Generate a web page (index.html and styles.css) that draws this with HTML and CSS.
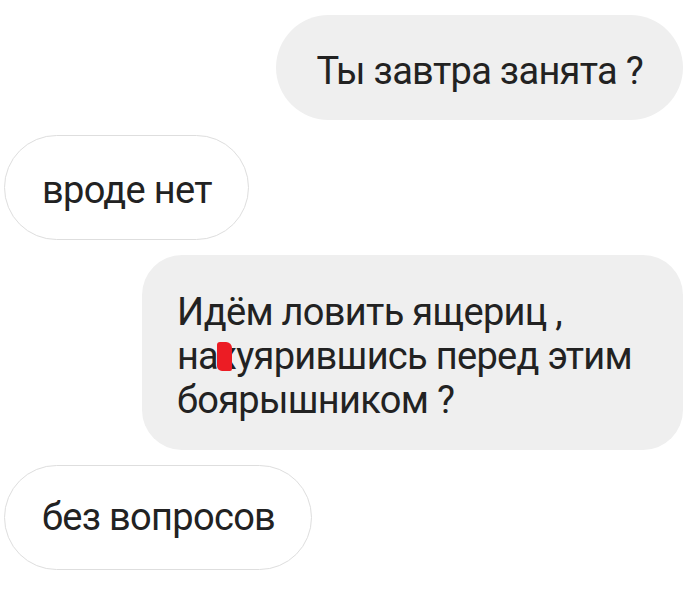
FILE: index.html
```html
<!DOCTYPE html>
<html lang="ru">
<head>
    <meta charset="UTF-8">
    <meta name="viewport" content="width=device-width, initial-scale=1.0">
    <title>Чат</title>
    <link rel="stylesheet" href="styles.css">
</head>
<body>
    <div class="chat">
        <div class="msg msg-out msg-short">Ты завтра занята ?</div>
        <div class="msg msg-in">вроде нет</div>
        <div class="msg msg-out msg-long">Идём ловить ящериц ,<br>на<span class="censor">х</span>уярившись перед этим<br>боярышником ?</div>
        <div class="msg msg-in msg-last">без вопросов</div>
    </div>
</body>
</html>
```

FILE: styles.css
```css
body {
    margin: 0;
    background: #fff;
    font-family: Roboto, "Noto Sans", sans-serif;
    color: #222;
}
.chat {
    display: flex;
    flex-direction: column;
    gap: 15px;
    padding: 15px 17px 0 4px;
}
.msg {
    font-size: 38px;
    letter-spacing: -0.7px;
    line-height: 40px;
    box-sizing: border-box;
}
.msg-out {
    align-self: flex-end;
    background: #efefef;
}
.msg-short {
    height: 105px;
    padding: 36px 40px 0 40px;
    border-radius: 53px;
}
.msg-long {
    height: 195px;
    padding: 35px 51px 0 35px;
    border-radius: 40px;
    line-height: 44px;
}
.msg-in {
    align-self: flex-start;
    height: 105px;
    padding: 34px 36px 0 37px;
    border: 1px solid #dedede;
    border-radius: 53px;
    background: #fff;
}
.msg-last {
    padding-top: 31px;
}
.censor {
    position: relative;
}
.censor::after {
    content: '';
    position: absolute;
    left: -1px;
    right: 4px;
    top: 8px;
    bottom: 7px;
    background: #ec1c24;
    border-radius: 3px 6px 2px 5px;
}
```
